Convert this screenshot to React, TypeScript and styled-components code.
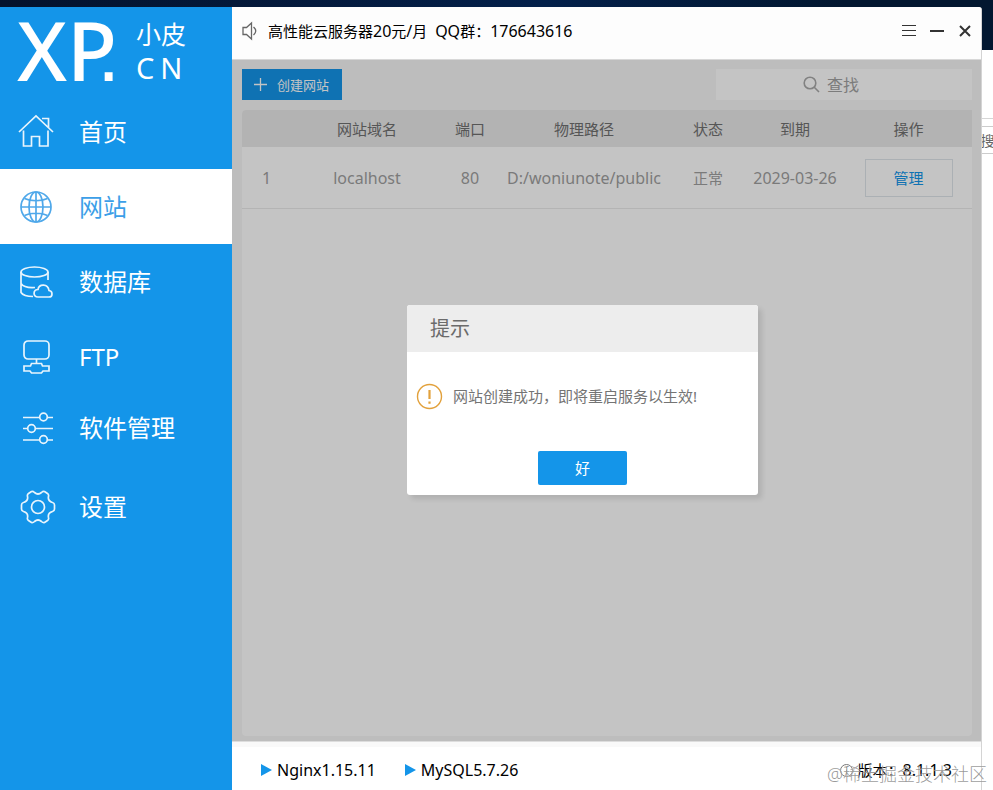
import React from "react";
import styled, { createGlobalStyle } from "styled-components";

const blue = "#1495e9";

const GlobalStyle = createGlobalStyle`
  * { box-sizing: border-box; }
  body {
    margin: 0;
    font-family: "Noto Sans", "Noto Sans CJK SC", sans-serif;
    font-size: 15px;
    line-height: 20px;
  }
  button, input { font: inherit; }
`;

const Desktop = styled.div`
  position: relative;
  display: flex;
  min-height: 100vh;
  padding-top: 7px;
  background: linear-gradient(90deg, #04122c, #03204a 55%, #021730 85%);
`;

const Window = styled.div`
  flex: 1;
  min-width: 0;
  display: flex;
`;

const Sidebar = styled.aside`
  flex: none;
  width: 232px;
  background: ${blue};
  color: #fff;
`;

const Logo = styled.div`
  display: flex;
  align-items: center;
  gap: 16px;
  height: 87px;
  padding-left: 17px;
`;

const LogoMark = styled.span`
  font-size: 82px;
  line-height: 87px;
  font-weight: 500;
`;

const LogoDot = styled.span`
  margin-left: -20px;
  font-family: "Liberation Sans", sans-serif;
`;

const LogoSide = styled.span`
  display: flex;
  flex-direction: column;
  font-size: 25px;
  line-height: 34px;
`;

const LogoLatin = styled.span`
  display: flex;
  gap: 6px;
  font-size: 29px;
`;

const Nav = styled.nav`
  display: grid;
  grid-template-rows: 75px 75px 75px 75px 68px 90px;
`;

const NavItem = styled.a<{ $active?: boolean }>`
  display: flex;
  align-items: center;
  gap: 23px;
  padding-left: 18px;
  font-size: 24px;
  line-height: 32px;
  text-decoration: none;
  color: ${(p) => (p.$active ? "#3c9fe8" : "#fff")};
  background: ${(p) => (p.$active ? "#fff" : "transparent")};
`;

const NavIcon = styled.svg`
  width: 38px;
  height: 38px;
  fill: none;
  stroke: currentColor;
  stroke-width: 1.7;
  opacity: 0.9;
`;

const Main = styled.div`
  flex: 1;
  min-width: 0;
  display: flex;
  flex-direction: column;
  border-right: 1px solid #d4d4d4;
  border-radius: 0 3px 0 0;
  background: #fff;
`;

const TitleBar = styled.header`
  display: flex;
  align-items: center;
  height: 53px;
  padding: 0 4px 4px 10px;
  border-bottom: 1px solid #d8d8d8;
  border-radius: 0 3px 0 0;
  background: #fdfdfd;
`;

const Announcement = styled.p`
  flex: 1;
  margin: 0 0 0 10px;
  color: #000;
  white-space: pre;
`;

const Latin = styled.span`
  font-size: 16px;
`;

const Controls = styled.div`
  display: flex;
  gap: 4px;
`;

const ControlButton = styled.button`
  display: grid;
  place-items: center;
  width: 24px;
  height: 24px;
  padding: 0;
  border: 0;
  background: none;
  color: #333;
`;

const Stroke = styled.svg<{ $color?: string }>`
  flex: none;
  fill: none;
  stroke: ${(p) => p.$color ?? "currentColor"};
`;

const Body = styled.main`
  position: relative;
  flex: 1;
  display: flex;
  flex-direction: column;
  padding: 9px 9px 5px 10px;
  background: #f6f6f6;
`;

const Toolbar = styled.div`
  display: flex;
  justify-content: space-between;
  margin-bottom: 10px;
`;

const CreateButton = styled.button`
  display: flex;
  align-items: center;
  gap: 10px;
  height: 31px;
  padding: 0 13px 0 12px;
  border: 0;
  background: ${blue};
  color: #fff;
  font-size: 13px;
`;

const Search = styled.label`
  display: flex;
  align-items: center;
  gap: 7px;
  width: 256px;
  height: 31px;
  padding-left: 87px;
  background: #fff;
  color: #a8a8a8;
`;

const SearchInput = styled.input`
  flex: 1;
  min-width: 0;
  padding: 0;
  border: 0;
  outline: 0;
  background: none;
  font-size: 16px;
  &::placeholder { color: #a2a2a2; opacity: 1; }
`;

const Panel = styled.div`
  flex: 1;
  border-radius: 4px;
  background: #fff;
`;

const SiteTable = styled.table`
  width: 100%;
  table-layout: fixed;
  border-collapse: separate;
  border-spacing: 0;
  text-align: center;
  white-space: nowrap;
`;

const Th = styled.th`
  height: 37px;
  padding: 0;
  font-weight: 400;
  color: #707070;
  background: #e9e9e9;
  &:first-child { border-radius: 4px 0 0 0; }
`;

const Td = styled.td`
  height: 62px;
  padding: 0;
  color: #9f9f9f;
  border-bottom: 1px solid #ebebeb;
`;

const ManageButton = styled.button`
  width: 88px;
  height: 38px;
  border: 1px solid #dfe6eb;
  background: transparent;
  color: ${blue};
`;

const Overlay = styled.div`
  position: absolute;
  inset: 0;
  display: flex;
  align-items: center;
  justify-content: center;
  padding: 0 48px 2px 0;
  background: rgba(0, 0, 0, 0.23);
`;

const Dialog = styled.section`
  width: 351px;
  border-radius: 3px;
  overflow: hidden;
  background: #fff;
  box-shadow: 4px 4px 5px rgba(0, 0, 0, 0.1);
`;

const DialogTitle = styled.h2`
  margin: 0;
  padding: 0 23px;
  font-size: 20px;
  line-height: 47px;
  font-weight: 400;
  color: #6b6b6b;
  background: #ededed;
`;

const DialogContent = styled.div`
  display: flex;
  align-items: center;
  gap: 10px;
  height: 89px;
  padding: 0 9px;
  color: #747474;
`;

const DialogFooter = styled.div`
  display: flex;
  justify-content: center;
  padding: 10px;
`;

const OkButton = styled.button`
  width: 89px;
  height: 34px;
  padding: 0;
  border: 0;
  border-radius: 2px;
  background: ${blue};
  color: #fff;
`;

const StatusBar = styled.footer`
  display: flex;
  align-items: center;
  gap: 29px;
  height: 49px;
  padding: 8px 29px 0;
  border-top: 1px solid #ddd;
  box-shadow: inset 0 5px 0 #f9f9f9;
  font-size: 16px;
  color: #000;
`;

const Service = styled.span`
  display: flex;
  align-items: center;
  gap: 5px;
`;

const Version = styled(Service)`
  margin-left: auto;
  font-size: 15px;
`;

const Behind = styled.div`
  flex: none;
  width: 11px;
  margin-top: 43px;
  padding-top: 68px;
  overflow: hidden;
  background: #fff;
`;

const BehindField = styled.div`
  padding-top: 7px;
  border-top: 1px solid #d6d6d6;
`;

const BehindText = styled.div`
  display: flex;
  justify-content: center;
  height: 28px;
  border: 1px solid #ccc;
  border-width: 1px 0;
  font-size: 14px;
  line-height: 28px;
  color: #666;
  white-space: nowrap;
`;

const Watermark = styled.span`
  position: absolute;
  right: 6px;
  bottom: 4px;
  font-size: 18px;
  line-height: 24px;
  font-weight: 300;
  color: rgba(110, 110, 110, 0.7);
  text-shadow: 0 0 1px #fff;
  pointer-events: none;
`;

const icons = {
  home: (
    <path d="M1 19 18 3l17 16M24 5.500h6.500V15M5.500 17.500V33h8v-9.500h8V33H30V17.500" />
  ),
  globe: (
    <>
      <circle cx="18" cy="19" r="15" />
      <ellipse cx="18" cy="19" rx="7" ry="15" />
      <path d="M18 4v30M3 19h30M6.500 10.500c6 3 17 3 23 0M6.500 27.500c6-3 17-3 23 0" />
    </>
  ),
  database: (
    <>
      <ellipse cx="16.500" cy="9" rx="13.500" ry="5" />
      <path d="M3 9v20.500c2 3 7 4 12 4M30 9v8M3 20.500c2 3 7 4.500 14 4" />
      <path d="M20 34h11c4 0 4-6 0-6.500-1-7-10-7-11-1-5 0-5.500 7.500 0 7.500z" />
    </>
  ),
  ftp: (
    <>
      <rect x="6" y="3" width="25" height="18" rx="4" />
      <path d="M18.500 21v4.500M13.500 25.500h10l1 2.500H31v5h-6l-1.500 2h-10L12 33H6v-5h6.500z" />
    </>
  ),
  sliders: (
    <>
      <path d="M5 8.500h16.500M29.500 8.500H35M5 19.500h4.500M17.500 19.500H35M5 31h16.500M29.500 31H35" />
      <circle cx="25.500" cy="8" r="3.800" />
      <circle cx="13.500" cy="19.500" r="3.800" />
      <circle cx="25.500" cy="30.500" r="3.800" />
    </>
  ),
  gear: (
    <>
      <circle cx="20" cy="19" r="6.500" />
      <path
        d="M13.500 3.500Q15 3 16.500 4.500Q20 7.500 23.500 4.500Q25 3 26.500 3.500L29.500 5.500Q31 6.500 30.500 8.500Q29.500 13 34.500 14.500Q36.500 15 36.500 17V21Q36.500 23 34.500 23.500Q29.500 25 30.500 29.500Q31 31.500 29.500 32.500L26.500 34.500Q25 35 23.500 33.500Q20 30.500 16.500 33.500Q15 35 13.500 34.500L10.500 32.500Q9 31.500 9.500 29.500Q10.500 25 5.500 23.500Q3.500 23 3.500 21V17Q3.500 15 5.500 14.500Q10.500 13 9.500 8.500Q9 6.500 10.500 5.500Z"
        strokeLinejoin="round"
      />
    </>
  ),
};

const navItems: { label: string; icon: keyof typeof icons; active?: boolean }[] = [
  { label: "首页", icon: "home" },
  { label: "网站", icon: "globe", active: true },
  { label: "数据库", icon: "database" },
  { label: "FTP", icon: "ftp" },
  { label: "软件管理", icon: "sliders" },
  { label: "设置", icon: "gear" },
];

const columns = [
  { label: "", width: 49 },
  { label: "网站域名", width: 152 },
  { label: "端口", width: 54 },
  { label: "物理路径", width: 174 },
  { label: "状态", width: 74 },
  { label: "到期", width: 100 },
  { label: "操作", width: 127 },
];

const services = ["Nginx1.15.11", "MySQL5.7.26"];

const PlayIcon = () => (
  <svg width="11" height="12" viewBox="0 0 11 12">
    <path d="M0 0 11 6 0 12z" fill={blue} />
  </svg>
);

export default function App() {
  return (
    <Desktop>
      <GlobalStyle />
      <Window>
        <Sidebar>
          <Logo>
            <LogoMark>
              XP<LogoDot>.</LogoDot>
            </LogoMark>
            <LogoSide>
              <span>小皮</span>
              <LogoLatin>
                <span>C</span>
                <span>N</span>
              </LogoLatin>
            </LogoSide>
          </Logo>
          <Nav>
            {navItems.map((item) => (
              <NavItem key={item.label} href="#" $active={item.active}>
                <NavIcon viewBox="0 0 38 38">{icons[item.icon]}</NavIcon>
                {item.label}
              </NavItem>
            ))}
          </Nav>
        </Sidebar>
        <Main>
          <TitleBar>
            <Stroke width="16" height="20" viewBox="0 0 16 20" $color="#666" strokeWidth="1.300">
              <path d="M1 6.500h3.500L9.500 2v16L4.500 13.500H1zM11.500 6q4.500 4 0 8" />
            </Stroke>
            <Announcement>
              高性能云服务器<Latin>20</Latin>元<Latin>/</Latin>月{"  "}
              <Latin>QQ</Latin>群：<Latin>176643616</Latin>
            </Announcement>
            <Controls>
              <ControlButton aria-label="菜单">
                <Stroke width="14" height="12" viewBox="0 0 14 12" shapeRendering="crispEdges">
                  <path d="M0 .5h14M0 5.500h14M0 10.500h14" />
                </Stroke>
              </ControlButton>
              <ControlButton aria-label="最小化">
                <Stroke width="14" height="12" viewBox="0 0 14 12" strokeWidth="2">
                  <path d="M0 6h14" />
                </Stroke>
              </ControlButton>
              <ControlButton aria-label="关闭">
                <Stroke width="12" height="12" viewBox="0 0 12 12" strokeWidth="2">
                  <path d="m1 1 10 10M11 1 1 11" />
                </Stroke>
              </ControlButton>
            </Controls>
          </TitleBar>
          <Body>
            <Toolbar>
              <CreateButton>
                <Stroke width="13" height="13" viewBox="0 0 13 13" strokeWidth="1.300">
                  <path d="M6.500 0v13M0 6.500h13" />
                </Stroke>
                创建网站
              </CreateButton>
              <Search>
                <Stroke width="17" height="17" viewBox="0 0 17 17" strokeWidth="1.600">
                  <circle cx="7" cy="7" r="5.800" />
                  <path d="m11 11 5 5" />
                </Stroke>
                <SearchInput type="text" placeholder="查找" aria-label="查找" />
              </Search>
            </Toolbar>
            <Panel>
              <SiteTable>
                <colgroup>
                  {columns.map((c) => (
                    <col key={c.label} width={c.width} />
                  ))}
                </colgroup>
                <thead>
                  <tr>
                    {columns.map((c) => (
                      <Th key={c.label}>{c.label}</Th>
                    ))}
                  </tr>
                </thead>
                <tbody>
                  <tr>
                    <Td><Latin>1</Latin></Td>
                    <Td><Latin>localhost</Latin></Td>
                    <Td><Latin>80</Latin></Td>
                    <Td><Latin>D:/woniunote/public</Latin></Td>
                    <Td>正常</Td>
                    <Td><Latin>2029-03-26</Latin></Td>
                    <Td><ManageButton>管理</ManageButton></Td>
                  </tr>
                </tbody>
              </SiteTable>
            </Panel>
            <Overlay>
              <Dialog role="dialog" aria-modal="true" aria-labelledby="dialog-title">
                <DialogTitle id="dialog-title">提示</DialogTitle>
                <DialogContent>
                  <Stroke width="27" height="27" viewBox="0 0 27 27" $color="#e2a13c" strokeWidth="1.400">
                    <circle cx="13.500" cy="13.500" r="12" />
                    <path d="M13.500 7v9M13.500 18.500v2.200" strokeWidth="2.200" />
                  </Stroke>
                  网站创建成功，即将重启服务以生效!
                </DialogContent>
                <DialogFooter>
                  <OkButton>好</OkButton>
                </DialogFooter>
              </Dialog>
            </Overlay>
          </Body>
          <StatusBar>
            {services.map((name) => (
              <Service key={name}>
                <PlayIcon />
                {name}
              </Service>
            ))}
            <Version>
              <Stroke width="13" height="13" viewBox="0 0 13 13" $color="#777">
                <circle cx="6.500" cy="6.500" r="6" />
                <path d="M6.500 5.500v4M6.500 3v1.300" />
              </Stroke>
              <span>
                版本：<Latin>8.1.1.3</Latin>
              </span>
            </Version>
          </StatusBar>
        </Main>
      </Window>
      <Behind>
        <BehindField>
          <BehindText>搜</BehindText>
        </BehindField>
      </Behind>
      <Watermark>@稀土掘金技术社区</Watermark>
    </Desktop>
  );
}
